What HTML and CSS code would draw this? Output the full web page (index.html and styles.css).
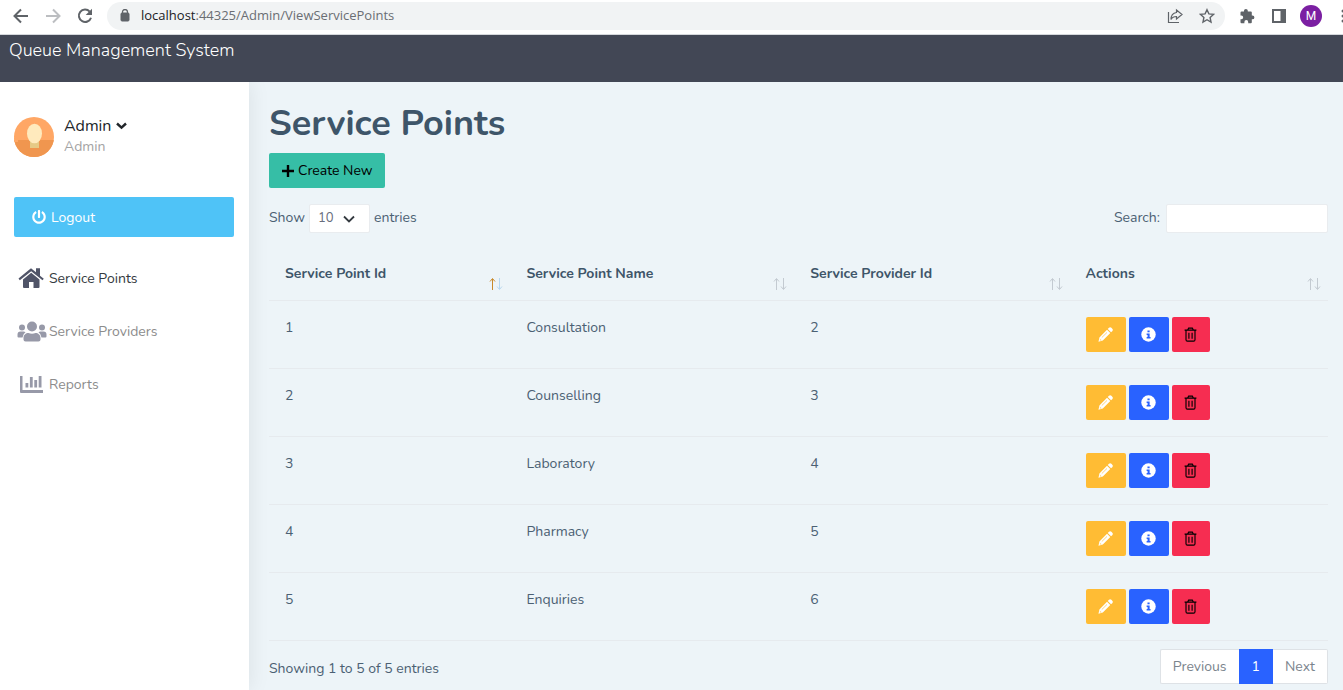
FILE: index.html
```html
<!DOCTYPE html>
<html lang="en">
<head>
<meta charset="utf-8">
<title>Service Points</title>
<link rel="stylesheet" href="styles.css">
</head>
<body>
<svg class="sprite" aria-hidden="true">
  <symbol id="sort" viewBox="0 0 14 14"><path d="M3.500 13V2M1 4.500L3.500 1.500L6 4.500" class="sort-up"/><path d="M10.500 1V12M8 9.500L10.500 12.500L13 9.500" class="sort-down"/></symbol>
  <symbol id="pencil" viewBox="0 0 16 16"><path d="M11.700.9a1.900 1.900 0 0 1 2.600 0l.9.900a1.900 1.900 0 0 1 0 2.600L13.900 5.700 10.400 2.200zM9.600 3l3.500 3.500-8 8L.5 15.600l1-4.500z"/><path d="M4 11.300l5.600-5.500" stroke="#ffbc34" stroke-width=".7"/><path d="M2 12.300l1.900 1.900-1.900.4z" fill="#ffbc34" opacity=".6"/></symbol>
  <symbol id="info" viewBox="0 0 16 16"><circle cx="8" cy="8" r="7.700"/><path d="M6.900 3.600h2.300v2.100H6.900zM6 6.800h3.200v3.900h1v1.600H6v-1.600h1V8.400H6z" fill="#2962ff"/></symbol>
  <symbol id="trash" viewBox="0 0 14 16"><path d="M.7 3.300h12.600M4 3.300L5 1.200h4l1 2.100M2.200 3.300v10.200c0 1 .6 1.500 1.500 1.500h6.600c.9 0 1.500-.5 1.500-1.500V3.300M5.300 6v6.500M8.700 6v6.500" fill="none" stroke="#000" stroke-width="1.200"/></symbol>
</svg>
<header class="browser">
  <button class="tool" aria-label="Back"><svg width="16" height="16" viewBox="0 0 16 16"><path d="M15 8H2M8 1.500L1.500 8L8 14.500" fill="none" stroke="#5f6368" stroke-width="2"/></svg></button>
  <button class="tool" aria-label="Forward"><svg width="16" height="16" viewBox="0 0 16 16"><path d="M1 8h13M8 1.500L14.500 8L8 14.500" fill="none" stroke="#bcbec1" stroke-width="2"/></svg></button>
  <button class="tool" aria-label="Reload"><svg width="16" height="16" viewBox="0 0 16 16"><path d="M12.700 3.600A6.200 6.200 0 1 0 14 9.700" fill="none" stroke="#5f6368" stroke-width="2"/><path d="M15 .7v6.300H8.700z" fill="#5f6368"/></svg></button>
  <div class="address">
    <svg width="10" height="13" viewBox="0 0 10 13"><rect x="1" y="4" width="8" height="8" rx="1" fill="#5f6368" stroke="#5f6368"/><path d="M2.500 5V3a2.500 2.500 0 0 1 5 0v2" fill="none" stroke="#5f6368" stroke-width="1.300"/></svg>
    <span class="url"><span class="host">localhost</span>:44325/Admin/ViewServicePoints</span>
    <button class="tool" aria-label="Share"><svg width="16" height="16" viewBox="0 0 16 16"><path d="M1.500 4v10.500H12M9.500 2l5.500 4.500-5.500 4.500V8.500C6.500 8.500 5 9.500 4 11.500c0-4 2-6.500 5.500-7z" fill="none" stroke="#5f6368" stroke-width="1.200"/></svg></button>
    <button class="tool" aria-label="Bookmark"><svg width="16" height="16" viewBox="0 0 16 16"><path d="M8 1.700l1.900 4.200 4.600.5-3.400 3.100.9 4.500-4-2.300L4 14l.9-4.500-3.400-3.100 4.600-.5z" fill="none" stroke="#5f6368" stroke-width="1.400"/></svg></button>
  </div>
  <button class="tool" aria-label="Extensions"><svg width="16" height="16" viewBox="0 0 16 16"><path d="M1.500 4.500a1 1 0 0 1 1-1H5V2.800a1.900 1.900 0 0 1 3.800 0v.7h3a1 1 0 0 1 1 1v3h.7a1.900 1.900 0 0 1 0 3.800h-.7v2.900a1 1 0 0 1-1 1H9.200V14a1.900 1.900 0 0 0-3.800 0v1.200H2.500a1 1 0 0 1-1-1v-3h.8a1.900 1.900 0 0 0 0-3.800h-.8z" fill="#5f6368"/></svg></button>
  <button class="tool" aria-label="Side panel"><svg width="16" height="16" viewBox="0 0 16 16"><path d="M1 1h14v14H1zM3 3v10h6.500V3z" fill="#5f6368" fill-rule="evenodd"/></svg></button>
  <button class="profile" aria-label="Profile">M</button>
  <button class="more" aria-label="Menu"><svg width="4" height="16" viewBox="0 0 4 16" fill="#5f6368"><circle cx="2" cy="3" r="1.500"/><circle cx="2" cy="8" r="1.500"/><circle cx="2" cy="13" r="1.500"/></svg></button>
</header>
<div class="topbar">Queue Management System</div>
<div class="shell">
  <aside class="sidebar">
    <div class="user">
      <svg width="40" height="40" viewBox="0 0 40 40"><defs><clipPath id="disc"><circle cx="20" cy="20" r="20"/></clipPath></defs><g clip-path="url(#disc)"><path d="M0 0h40v40H0z" fill="#ffa765"/><path d="M0 23h40v17H0z" fill="#f0964f"/><path d="M0 21h4v4H0z" fill="#ffa765"/><path d="M16 24h9v7h-9z" fill="#e6ca86"/><ellipse cx="20.500" cy="16.500" rx="7.500" ry="9.800" fill="#ffeabd"/></g></svg>
      <div>
        <a href="#" class="name">Admin <svg width="11" height="8" viewBox="0 0 11 8"><path d="M1 1.500l4.500 4.200L10 1.500" fill="none" stroke="#212529" stroke-width="2.400"/></svg></a>
        <div class="role">Admin</div>
      </div>
    </div>
    <button class="logout"><svg width="14" height="14" viewBox="0 0 512 512" fill="#fff"><path d="M400 54.100c63 45 104 118.600 104 201.900 0 136.800-110.800 247.700-247.500 248C120 504.300 8.200 393 8 256.400 7.900 173.100 48.900 99.300 111.800 54.200c11.700-8.300 28-4.800 35 7.700L162.600 90c5.900 10.500 3.100 23.800-6.600 31-41.500 30.800-68 79.600-68 134.900-.1 92.300 74.500 168.100 168 168.100 91.600 0 168.600-74.200 168-169.100-.3-51.800-24.700-101.800-68.100-134-9.700-7.200-12.400-20.500-6.500-30.900l15.800-28.100c7-12.400 23.200-16.100 34.800-7.800zM296 264V24c0-13.300-10.700-24-24-24h-32c-13.300 0-24 10.700-24 24v240c0 13.300 10.700 24 24 24h32c13.300 0 24-10.700 24-24z"/></svg>Logout</button>
    <nav class="menu">
      <a href="#" class="active"><svg width="30" height="22" viewBox="0 0 30 22" fill="#505468"><path d="M1.500 10.500L14 .2 19 4.300V.3h4V7.700L26.800 10.700 25.500 12.300 14.200 3.200 2.800 12.200z"/><path d="M14.200 4.700l8.300 6.800V19a1 1 0 0 1-1 1h-5v-6h-4.500v6h-5a1 1 0 0 1-1-1v-7.500z"/></svg>Service Points</a>
      <a href="#"><svg width="30" height="22" viewBox="0 0 30 22" fill="#9799a8"><circle cx="15" cy="5.500" r="5"/><circle cx="5" cy="6.500" r="3"/><circle cx="25" cy="6.500" r="3"/><path d="M6.500 18.500V17c0-3 2.300-5 5-5 2 1 5 1 7 0 2.700 0 5 2 5 5v1.500a2 2 0 0 1-2 2h-13a2 2 0 0 1-2-2zM.5 15.500v-2a3 3 0 0 1 3-3h3q1.200 0 2 .8Q6 12.800 5.500 16.500h-4a1 1 0 0 1-1-1zM29.500 15.500v-2a3 3 0 0 0-3-3h-3q-1.200 0-2 .8Q24 12.800 24.500 16.500h4a1 1 0 0 0 1-1z"/></svg>Service Providers</a>
      <a href="#"><svg width="30" height="22" viewBox="0 0 30 22" fill="#9799a8"><path d="M3 2h2.500v14H26v3H4a1 1 0 0 1-1-1zM8.500 9h2.800v4.500H8.500zM12.900 3h2.800v10.500h-2.800zM17.300 6h2.800v7.500h-2.800zM21.700 2h2.800v11.500h-2.800z"/></svg>Reports</a>
    </nav>
  </aside>
  <main class="content">
    <h1>Service Points</h1>
    <a href="#" class="create"><svg width="12" height="12" viewBox="0 0 12 12"><path d="M6 0v12M0 6h12" stroke="#000" stroke-width="2.400"/></svg>Create New</a>
    <div class="filters">
      <label class="length">Show <span class="pick"><select><option>10</option><option>25</option><option>50</option></select><svg width="12" height="8" viewBox="0 0 12 8"><path d="M1 1.500l5 5 5-5" fill="none" stroke="#343a40" stroke-width="1.800"/></svg></span> entries</label>
      <label class="search">Search:<input type="search"></label>
    </div>
    <table>
      <colgroup><col class="c-id"><col class="c-name"><col class="c-provider"><col class="c-actions"></colgroup>
      <thead><tr>
        <th><div class="head">Service Point Id<svg class="sort asc"><use href="#sort"/></svg></div></th>
        <th><div class="head">Service Point Name<svg class="sort"><use href="#sort"/></svg></div></th>
        <th><div class="head">Service Provider Id<svg class="sort"><use href="#sort"/></svg></div></th>
        <th><div class="head">Actions<svg class="sort"><use href="#sort"/></svg></div></th>
      </tr></thead>
      <tbody>
        <tr><td>1</td><td>Consultation</td><td>2</td><td><div class="actions"><button class="edit" aria-label="Edit"><svg><use href="#pencil"/></svg></button><button class="info" aria-label="Details"><svg><use href="#info"/></svg></button><button class="delete" aria-label="Delete"><svg><use href="#trash"/></svg></button></div></td></tr>
        <tr><td>2</td><td>Counselling</td><td>3</td><td><div class="actions"><button class="edit" aria-label="Edit"><svg><use href="#pencil"/></svg></button><button class="info" aria-label="Details"><svg><use href="#info"/></svg></button><button class="delete" aria-label="Delete"><svg><use href="#trash"/></svg></button></div></td></tr>
        <tr><td>3</td><td>Laboratory</td><td>4</td><td><div class="actions"><button class="edit" aria-label="Edit"><svg><use href="#pencil"/></svg></button><button class="info" aria-label="Details"><svg><use href="#info"/></svg></button><button class="delete" aria-label="Delete"><svg><use href="#trash"/></svg></button></div></td></tr>
        <tr><td>4</td><td>Pharmacy</td><td>5</td><td><div class="actions"><button class="edit" aria-label="Edit"><svg><use href="#pencil"/></svg></button><button class="info" aria-label="Details"><svg><use href="#info"/></svg></button><button class="delete" aria-label="Delete"><svg><use href="#trash"/></svg></button></div></td></tr>
        <tr><td>5</td><td>Enquiries</td><td>6</td><td><div class="actions"><button class="edit" aria-label="Edit"><svg><use href="#pencil"/></svg></button><button class="info" aria-label="Details"><svg><use href="#info"/></svg></button><button class="delete" aria-label="Delete"><svg><use href="#trash"/></svg></button></div></td></tr>
      </tbody>
    </table>
    <div class="footer">
      <div>Showing 1 to 5 of 5 entries</div>
      <nav class="pages"><a href="#">Previous</a><a href="#" class="current">1</a><a href="#">Next</a></nav>
    </div>
  </main>
</div>
</body>
</html>
```
FILE: styles.css
```css
* { box-sizing: border-box; }
body { margin: 0; min-height: 100vh; display: flex; flex-direction: column; overflow-x: hidden; font: 14px/21px Nunito, Lato, sans-serif; color: #4b6073; background: #edf4f8; }
a { text-decoration: none; color: inherit; }
button, input, select { font: inherit; }
button { padding: 0; border: 0; background: none; }
svg { flex: none; display: block; }
.sprite { position: absolute; width: 0; height: 0; }

.browser { display: flex; align-items: center; gap: 16px; height: 35px; padding: 0 0 3px 13px; background: #fff; border-bottom: 1px solid #d5d8dc; overflow: hidden; }
.tool { display: flex; flex: none; }
.address { flex: 1; display: flex; align-items: center; gap: 16px; height: 28px; padding: 0 10px 0 13px; margin: 0 -2px; border-radius: 14px; background: #f1f3f4; }
.url { flex: 1; margin-left: -5px; font: 13px/21px "Segoe UI", "Open Sans", sans-serif; color: #6a6e73; }
.host { color: #202124; }
.profile { flex: none; width: 22px; height: 22px; margin: 0 3px 0 -3px; border-radius: 50%; background: #7b1fa2; color: #fff; font: 12px/22px Roboto, sans-serif; }
.more { flex: none; width: 2px; overflow: hidden; }

.topbar { position: relative; z-index: 1; height: 47px; padding: 4px 9px; background: #424755; color: #fff; font-size: 18px; font-weight: 300; line-height: 23px; }
.shell { flex: 1; display: flex; }
.sidebar { flex: none; width: 249px; padding: 35px 15px 0 14px; background: #fff; box-shadow: 1px 0 20px rgba(0, 0, 0, .08); }
.user { display: flex; gap: 10px; height: 80px; }
.name { display: flex; align-items: center; gap: 5px; font-size: 16px; line-height: 18px; color: #212529; }
.role { line-height: 23px; color: #a3a3a3; }
.logout { display: flex; align-items: center; gap: 5px; width: 100%; height: 40px; padding-left: 18px; border-radius: 2px; background: #4fc3f7; color: #fff; }
.menu { display: flex; flex-direction: column; gap: 18px; padding: 24px 0 0 3px; }
.menu a { display: flex; align-items: center; gap: 2px; height: 35px; color: #8c8c8c; }
.menu .active { color: #343a40; }

.content { flex: 1; min-width: 0; padding: 19px 15px 6px 20px; }
h1 { margin: 0 0 7px; font-size: 36px; line-height: 45px; font-weight: 700; color: #3e5569; }
.create { display: inline-flex; align-items: center; gap: 4px; height: 35px; padding: 0 12px 0 13px; border-radius: 2px; background: #36bea6; color: #000; vertical-align: top; }
.filters { display: flex; justify-content: space-between; padding: 16px 0 13px; line-height: 27px; }
.filters label { display: flex; gap: 4px; height: 29px; }
.filters .search { gap: 6px; }
.pick { display: flex; align-items: center; position: relative; }
.pick svg { position: absolute; right: 15px; pointer-events: none; }
.pick select { appearance: none; width: 61px; height: 29px; padding: 0 8px; border: 1px solid #e9ecef; border-radius: 2px; background: #fff; color: #686d7c; font-size: 13px; }
.search input { width: 162px; height: 29px; border: 1px solid #e9ecef; border-radius: 2px; background: #fff; }

table { width: 100%; table-layout: fixed; border-collapse: separate; border-spacing: 0; }
.c-id { width: 22.8%; }
.c-name { width: 26.8%; }
.c-provider { width: 26%; }
.c-actions { width: 24.4%; }
th, td { padding: 16px; text-align: left; vertical-align: top; border-bottom: 1px solid #e6eaee; }
th { padding: 17px 7px 9px 16px; font-weight: 700; color: #3e5569; }
.head { display: flex; justify-content: space-between; align-items: flex-start; height: 28px; }
.sort { width: 14px; height: 14px; align-self: flex-end; fill: none; stroke: #c3cad1; color: #c3cad1; }
.sort-up { stroke: currentColor; }
.sort.asc { color: #c98a2c; stroke: #b9d8ef; }
.actions { display: flex; gap: 3px; }
.actions button { display: flex; align-items: center; justify-content: center; width: 40px; height: 35px; border-radius: 2px; }
.actions svg { width: 15px; height: 15px; fill: #fff; }
.actions .edit { background: #ffbc34; }
.actions .info { background: #2962ff; }
.actions .delete { width: 38px; background: #f62d51; }

.footer { display: flex; justify-content: space-between; padding-top: 8px; }
.footer > div { padding-top: 9px; }
.pages { display: flex; }
.pages a { height: 35px; padding: 6px 12px; border: 1px solid #dee2e6; background: #fff; color: #7a848d; }
.pages a:first-child { border-right: 0; border-radius: 2px 0 0 2px; }
.pages a:last-child { border-left: 0; border-radius: 0 2px 2px 0; }
.pages .current { border-color: #2962ff; background: #2962ff; color: #fff; }
```
